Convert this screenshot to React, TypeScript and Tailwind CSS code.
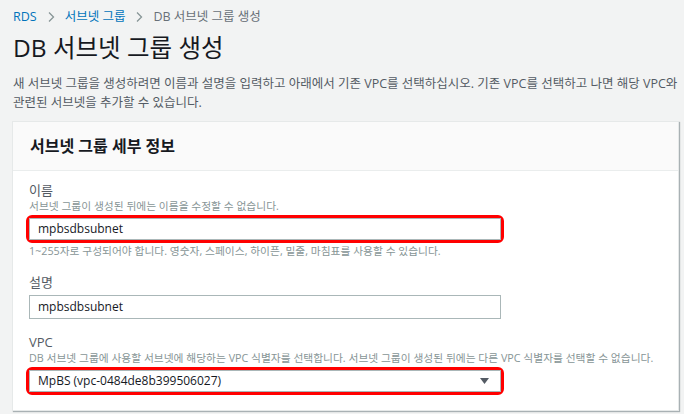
import React from "react";

const font = { fontFamily: '"Open Sans", "Noto Sans CJK KR", sans-serif' };

function Chevron() {
  return (
    <svg width="10" height="12" viewBox="0 0 10 12" className="mx-[9px]">
      <path d="M3 1.5 L7.5 6 L3 10.5" fill="none" stroke="#879596" strokeWidth="1.3" />
    </svg>
  );
}

export default function App() {
  return (
    <div className="w-[684px] h-[414px] bg-[#f2f3f3] overflow-hidden text-[#16191f]" style={font}>
      <div className="pl-[13px] pr-2">
        <div className="flex items-center h-[16px] mt-[9px] text-[12.5px]">
          <span className="text-[#0073bb]">RDS</span>
          <Chevron />
          <span className="text-[#0073bb]">서브넷 그룹</span>
          <Chevron />
          <span className="text-[#687078]">DB 서브넷 그룹 생성</span>
        </div>
        <h1 className="mt-[8px] text-[24.5px] leading-[30px] text-[#16191f]">DB 서브넷 그룹 생성</h1>
        <p className="mt-[11px] text-[12.5px] leading-[19px] text-[#545b64] whitespace-nowrap">
          새 서브넷 그룹을 생성하려면 이름과 설명을 입력하고 아래에서 기존 VPC를 선택하십시오. 기존 VPC를 선택하고 나면 해당 VPC와
          <br />
          관련된 서브넷을 추가할 수 있습니다.
        </p>
      </div>
      <div className="ml-[12px] mt-[9px] w-[667px] bg-white border border-[#e6e9e9] shadow-[1px_1px_1px_0_rgba(0,28,36,0.3)]">
        <div className="h-[49px] bg-[#fafafa] border-b border-[#eaeded] flex items-center pl-[17px]">
          <h2 className="text-[16px] font-bold text-[#16191f]">서브넷 그룹 세부 정보</h2>
        </div>
        <div className="pl-[13px] pt-[10px]">
          <div className="text-[13px] leading-[18px] text-[#545b64] pl-[3px]">이름</div>
          <div className="text-[10.75px] leading-[14px] text-[#879596] pl-[3px]">서브넷 그룹이 생성된 뒤에는 이름을 수정할 수 없습니다.</div>
          <div className="mt-[2px] w-[478px] border-[3px] border-[#ff0000] rounded-[6px]">
            <div className="h-[22px] border border-[#aab7b8] bg-white flex items-center pl-[8px] text-[12px] text-[#16191f]">mpbsdbsubnet</div>
          </div>
          <div className="mt-[1px] text-[10.75px] leading-[14px] text-[#879596] pl-[3px]">1~255자로 구성되어야 합니다. 영숫자, 스페이스, 하이픈, 밑줄, 마침표를 사용할 수 있습니다.</div>

          <div className="mt-[15px] text-[13px] leading-[18px] text-[#545b64] pl-[3px]">설명</div>
          <div className="mt-[4px] ml-[3px] w-[472px] h-[24px] border border-[#aab7b8] bg-white flex items-center pl-[8px] text-[12px] text-[#16191f]">mpbsdbsubnet</div>

          <div className="mt-[14px] text-[13px] leading-[18px] text-[#545b64] pl-[3px]">VPC</div>
          <div className="text-[10.75px] leading-[14px] text-[#879596] pl-[3px]">DB 서브넷 그룹에 사용할 서브넷에 해당하는 VPC 식별자를 선택합니다. 서브넷 그룹이 생성된 뒤에는 다른 VPC 식별자를 선택할 수 없습니다.</div>
          <div className="mt-[2px] w-[478px] border-[3px] border-[#ff0000] rounded-[6px]">
            <div className="h-[22px] border border-[#aab7b8] bg-white flex items-center justify-between pl-[8px] pr-[11px] text-[12px] text-[#16191f]">
              <span>MpBS (vpc-0484de8b399506027)</span>
              <svg width="9" height="6" viewBox="0 0 9 6"><path d="M0 0 H9 L4.5 6 Z" fill="#545b64" /></svg>
            </div>
          </div>
          <div className="h-[15px]" />
        </div>
      </div>
    </div>
  );
}
